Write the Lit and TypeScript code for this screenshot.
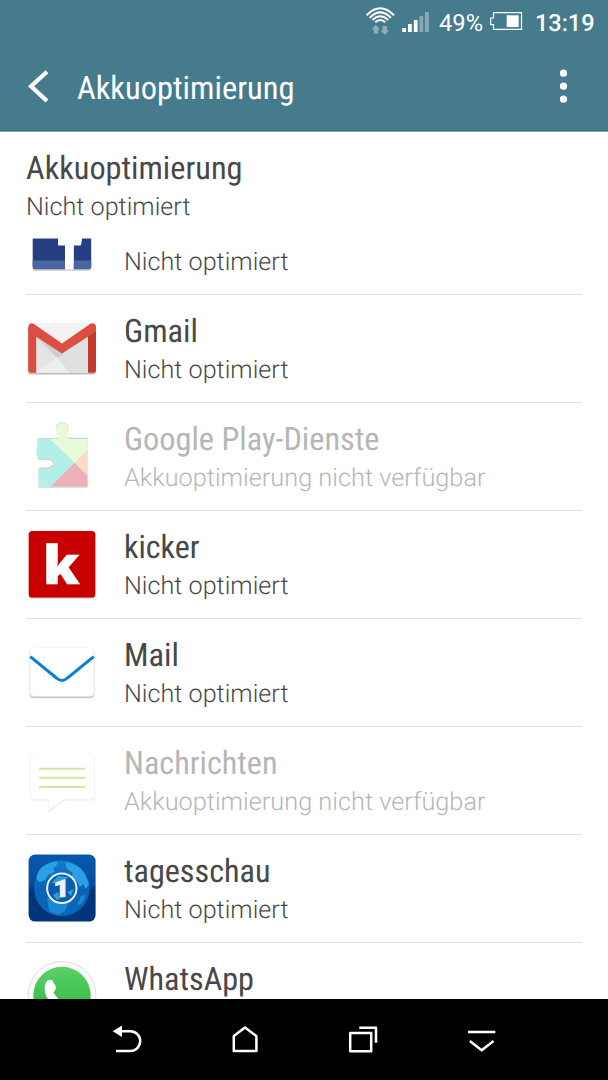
import { LitElement, html, svg, css } from "lit";
import { customElement, property } from "lit/decorators.js";

@customElement("fit-text")
class FitText extends LitElement {
  @property() text = "";
  @property() kind = "title";
  @property({ type: Number }) length = 100;

  static styles = css`
    :host { display: block; height: 36px; }
    svg { display: block; overflow: visible; width: 100%; height: 100%; }
    text { font-family: "Roboto Condensed", Roboto, sans-serif; fill: currentColor; text-rendering: geometricPrecision; }
    .title { font-size: 32.2px; font-weight: 400; font-stretch: 75%; }
    .sub { font-family: Roboto, sans-serif; font-size: 25px; font-weight: 300; }
    .pct { font-family: Roboto, sans-serif; font-size: 23.7px; font-weight: 400; }
    .time { font-family: Roboto, sans-serif; font-size: 23.7px; font-weight: 500; }
  `;

  render() {
    return html`<svg><text class=${this.kind} x="0" y="29" textLength=${this.length}
      lengthAdjust="spacingAndGlyphs">${this.text}</text></svg>`;
  }
}

const icons: Record<string, unknown> = {
  facebook: svg`
    <path d="M33 80H91V81.5Q91 83.7 89 83.7H35Q33 83.7 33 81.5Z" fill="#c9cdd6"/>
    <path d="M32.7 51.5H58V58.5H65V82H35Q32.7 82 32.7 80Z" fill="#263f83"/>
    <path d="M82 51.5H91.2V80Q91.2 82 89 82H73.7V58.5H80.5Q81.5 58 82 51.5Z" fill="#263f83"/>
    <path d="M32.7 73.5H65V82.2H35Q32.7 82.2 32.7 80ZM73.7 73.5H91.2V80Q91.2 82.2 89 82.2H73.7Z" fill="#4a65a0"/>
    <path d="M65.2 58H73.5V82.4H65.2Z" fill="#fff"/>`,
  gmail: svg`
    <rect x="28.2" y="31" width="67.8" height="48.4" rx="3" fill="#bdbdbd"/>
    <rect x="30" y="28.5" width="64" height="49.2" fill="#e4e4e4"/>
    <path d="M33 28.5H91L62 49Z" fill="#f2f2f2"/>
    <path d="M36 40L70 77.7H88V40L62 58Z" fill="#e0e0e0"/>
    <path d="M36 77.7L57 62.5L70 77.7Z" fill="#eeeeee"/>
    <path d="M36 39V42L57 62.5L64 60Z" fill="#cecece"/>
    <path d="M28.2 33H36.2V77.7H31Q28.2 77.7 28.2 75Z" fill="#da4e42"/>
    <path d="M96 33H88V77.7H93Q96 77.7 96 75Z" fill="#c2392d"/>
    <path d="M28.2 36V32Q28.5 28.5 32 28.3Q33 28.3 34 29L62 48.5L90 29Q91 28.3 92.5 28.3Q96 28.7 96 32V36.5L62 58.5L28.2 36.5Z" fill="#dc4e43"/>`,
  play: svg`
    <defs><clipPath id="pz"><path d="M37.7 37Q37.7 36 39 36H56.5Q58.5 36 58 33.5Q55.5 29.5 56 25.5C56.5 18.5 68.3 18.5 68.7 25.5Q69 29.5 66.8 33.5Q66.5 36 68.5 36H87.7V83.7H38.5V67.5Q39 66 41 66H47Q53 65.5 53 61Q53 55 46.5 55Q42 56.5 39 56Q36.5 55 36.5 50Z"/></clipPath></defs>
    <path d="M37.7 35H56.5Q58.5 34.8 58 32Q55.5 28 56 24C56.5 18 68.3 18 68.7 24Q69 28 66.8 32Q66.5 34.8 68.5 34.8H87.7V84.7H38.5V65Q40 64 47 64L53 61.5V60H38Z" fill="#cfd3d1"/>
    <path d="M36.5 57H46.5Q53 57 52.5 61Q51 64 47 64.3H40L36.5 66Z" fill="#fff"/>
    <g clip-path="url(#pz)">
      <path d="M30 15H90V90H30Z" fill="#e9fadb"/>
      <path d="M30 35H49L74.3 59.7L50.3 83.7V90H30Z" fill="#b3eee7"/>
      <path d="M87.7 47L74.3 59.7L87.7 72.7Z" fill="#ffd9c3"/>
      <path d="M74.3 59.7L50.3 83.7H87.7V72.7Z" fill="#ecb0b9"/>
    </g>`,
  kicker: svg`
    <rect x="28.7" y="21" width="66.6" height="66.5" rx="3.5" fill="#c8c0c0"/>
    <rect x="28.7" y="20" width="66.6" height="66.4" rx="3.5" fill="#c90000"/>
    <text x="43" y="73.3" font-family="Open Sans" font-weight="800" font-size="53" textLength="36.5" lengthAdjust="spacingAndGlyphs" fill="#fff" stroke="#fff" stroke-width=".6">k</text>`,
  mail: svg`
    <rect x="29.2" y="29" width="65.6" height="50.5" rx="4.5" fill="#e8e8e8"/>
    <rect x="30" y="31" width="64" height="48" rx="4" fill="#c8c8c8"/>
    <rect x="30" y="28.7" width="64" height="48.5" rx="4" fill="#fff" stroke="#eee" stroke-width=".6"/>
    <path d="M30.3 37.7L56.5 59Q62 64 67.5 59L93.7 37.7" fill="none" stroke="#0a7fd8" stroke-width="3"/>`,
  messages: svg`
    <path d="M34.5 28.8H90Q94.3 28.8 94.3 33V68.5Q94.3 73 90 73H64L49.3 84.3V73H34.5Q30.3 73 30.3 68.5V33Q30.3 28.8 34.5 28.8Z" fill="#eee" stroke="#f2f2f2" stroke-width="1.6"/>
    <path d="M34.5 28.3H90Q94 28.3 94 32.5V68Q94 72 90 72H63.5L49 83V72H34.5Q30.5 72 30.5 68V32.5Q30.5 28.3 34.5 28.3Z" fill="#fff"/>
    <path d="M39 41.7H85M39 50.7H85M39 60H85" stroke="#d2e99a" stroke-width="2"/>`,
  news: svg`
    <defs>
      <linearGradient id="nb" x2="0" y2="1"><stop offset="0" stop-color="#0659ae"/><stop offset=".45" stop-color="#064c9b"/><stop offset=".55" stop-color="#013478"/><stop offset="1" stop-color="#02367a"/></linearGradient>
      <linearGradient id="ng" x2=".3" y2="1"><stop offset="0" stop-color="#1786d6"/><stop offset=".5" stop-color="#0b62b5"/><stop offset="1" stop-color="#0a66b8"/></linearGradient>
    </defs>
    <rect x="28.6" y="19.6" width="67" height="67" rx="6.5" fill="url(#nb)"/>
    <circle cx="61.8" cy="53.3" r="27.7" fill="url(#ng)"/>
    <path d="M37 40Q40 31 49 28Q55 25.5 58 27L56 31L53 33L55 37L48 40L45 45L40 47L37 45ZM65 27Q78 28 85 39L89 49L86 54L83 49L80 52L76 45L70 44L73 38L67 34Z" fill="#2ba0e6"/>
    <path d="M47 62L56 67L68 68L65 76L58 80L49 76ZM81 61L86 60L82 69L77 70Z" fill="#1989d6"/>
    <circle cx="61.8" cy="53.3" r="14" fill="#0a5caa"/>
    <path d="M51 48L58 41L69 42L64 45L57 48ZM53 60L58 57L60 64L57 65ZM67 57L74 54L71 61Z" fill="#2b9fe2"/>
    <circle cx="61.8" cy="53.3" r="14.7" fill="none" stroke="#eaf3f9" stroke-width="2"/>
    <text transform="translate(53.2 62.5) skewY(-4)" font-family="Roboto" font-weight="900" font-size="24" textLength="16.5" lengthAdjust="spacingAndGlyphs" fill="#f0f4f6" stroke="#f0f4f6" stroke-width=".7">1</text>`,
  whatsapp: svg`
    <defs><linearGradient id="wg" x2="0" y2="1"><stop offset="0" stop-color="#5bd066"/><stop offset="1" stop-color="#27b43e"/></linearGradient></defs>
    <circle cx="62" cy="52.5" r="34" fill="#fbfbfb" stroke="#dedede" stroke-width="1"/>
    <circle cx="62" cy="52.5" r="28.7" fill="url(#wg)"/>
    <path d="M47.5 37.5Q50 36 52.5 37.5L56 44Q56.5 46 53.5 49.5Q58 57 64 60L62 70C52 64 44 54 44.7 44Q45 39.5 47.5 37.5Z" fill="#fff"/>`,
};

interface App { icon: string; name: string; width: number; off?: boolean; }
const apps: App[] = [
  { icon: "facebook", name: "", width: 0 },
  { icon: "gmail", name: "Gmail", width: 74 },
  { icon: "play", name: "Google Play-Dienste", width: 255.5, off: true },
  { icon: "kicker", name: "kicker", width: 75.5 },
  { icon: "mail", name: "Mail", width: 55 },
  { icon: "messages", name: "Nachrichten", width: 153.5, off: true },
  { icon: "news", name: "tagesschau", width: 146.5 },
  { icon: "whatsapp", name: "WhatsApp", width: 130 },
];

const navIcons = [
  svg`<path d="M112.7 32.3L122 26.5V38Z" fill="#fff" stroke="none"/><path d="M121 32.2H130.3A9.9 9.9 0 0 1 130.3 52H116"/>`,
  svg`<path d="M233.8 52V37L245 28.5L256.4 37V52Z"/>`,
  svg`<path d="M350.2 34H371.2V52.2H350.2ZM359.3 28.7H376V43.7"/>`,
  svg`<path d="M468 33H495.3M469.8 42L481.7 51.3L493.5 42"/>`,
];

@customElement("app-root")
class AppRoot extends LitElement {
  static styles = css`
    :host { display: flex; flex-direction: column; width: 608px; height: 1080px; overflow: hidden; background: #fff; color: #484848; }
    svg { display: block; flex: none; }
    .top { height: 132px; box-sizing: border-box; background: #457b8d; border-bottom: 1px solid #7fa5b2; color: #fff; flex: none; }
    .status { display: flex; height: 44px; padding-left: 362px; }
    .status fit-text { padding-top: 1.5px; }
    .pct { width: 51px; }
    .time { width: 60px; }
    .bar { display: flex; height: 86px; border-bottom: 1px solid #3a7388; }
    .bar fit-text { width: 440px; padding-top: 26px; }
    .head { height: 106px; box-sizing: border-box; padding: 18px 0 0 26px; flex: none; }
    .list { height: 761px; overflow: hidden; flex: none; }
    .row { display: flex; height: 107px; margin: 0 26px; border-bottom: 1px solid #dedede; }
    .row:first-child { margin-top: -51px; }
    .copy { flex: 1; padding-top: 18px; }
    .off { color: #b6b6b6; }
    .nav { display: flex; height: 81px; padding-left: 68px; background: #000; flex: none; }
  `;

  render() {
    return html`
      <header class="top">
        <div class="status">
          <svg width="77" height="44" viewBox="362 0 77 44">
            <g fill="none" stroke="#fff" stroke-width="2.1">
              <path d="M366.6 15.3Q380.2 1.2 394 15.3"/><path d="M369.7 17.7Q380.2 7.2 390.9 17.7"/>
              <path d="M372.5 19.9Q380.2 12.6 388 19.9"/><path d="M375.3 22.2Q380.2 17.8 385.2 22.2"/>
            </g>
            <path d="M371.5 29.3L375.8 24.8L380.2 29.3H378.2V33.5H373.7V29.3ZM380.5 30.3H382.5V26H387V30.3H389.2L384.8 35Z" fill="#8cadb8"/>
            <path d="M402.2 28H406V32H402.2ZM408 24H411.8V32H408ZM413.8 20H417.6V32H413.8Z" fill="#fff"/>
            <path d="M419.4 16H423.2V32H419.4ZM425 12H428.8V32H425Z" fill="#87aab5"/>
          </svg>
          <fit-text class="pct" kind="pct" text="49%" .length=${44}></fit-text>
          <svg width="45" height="44" viewBox="490 0 45 44">
            <path d="M493.5 12.7H521.5V29.4H493.5V24.7H490.7V18H493.5Z" fill="none" stroke="#fff" stroke-width="1.2"/>
            <rect x="506.7" y="15.3" width="12" height="11.7" fill="#fff"/>
          </svg>
          <fit-text class="time" kind="time" text="13:19" .length=${59.5}></fit-text>
        </div>
        <div class="bar">
          <svg width="77" height="86" viewBox="0 44 77 86"><path d="M47 71.7L31 86.2L47 101" fill="none" stroke="#fff" stroke-width="4.2"/></svg>
          <fit-text text="Akkuoptimierung" .length=${217.5}></fit-text>
          <svg width="91" height="86" viewBox="517 44 91 86" fill="#fff"><circle cx="563.5" cy="73.2" r="3.6"/><circle cx="563.5" cy="86.2" r="3.6"/><circle cx="563.5" cy="99.2" r="3.6"/></svg>
        </div>
      </header>
      <section class="head">
        <fit-text text="Akkuoptimierung" .length=${216.5}></fit-text>
        <fit-text kind="sub" text="Nicht optimiert" .length=${164.5}></fit-text>
      </section>
      <main class="list">
        ${apps.map((a) => html`
          <div class="row">
            <svg width="98" height="107" viewBox="26 0 98 107">${icons[a.icon]}</svg>
            <div class="copy ${a.off ? "off" : ""}">
              <fit-text .text=${a.name} .length=${a.width}></fit-text>
              ${a.icon === "whatsapp" ? "" : html`<fit-text kind="sub" .text=${a.off ? "Akkuoptimierung nicht verfügbar" : "Nicht optimiert"} .length=${a.off ? 361.5 : 164.5}></fit-text>`}
            </div>
          </div>`)}
      </main>
      <nav class="nav">
        ${navIcons.map((n, i) => html`<svg width="118" height="81" viewBox="${68 + i * 118} 0 118 81" fill="none" stroke="#fff" stroke-width="2.5" stroke-linejoin="round">${n}</svg>`)}
      </nav>`;
  }
}
